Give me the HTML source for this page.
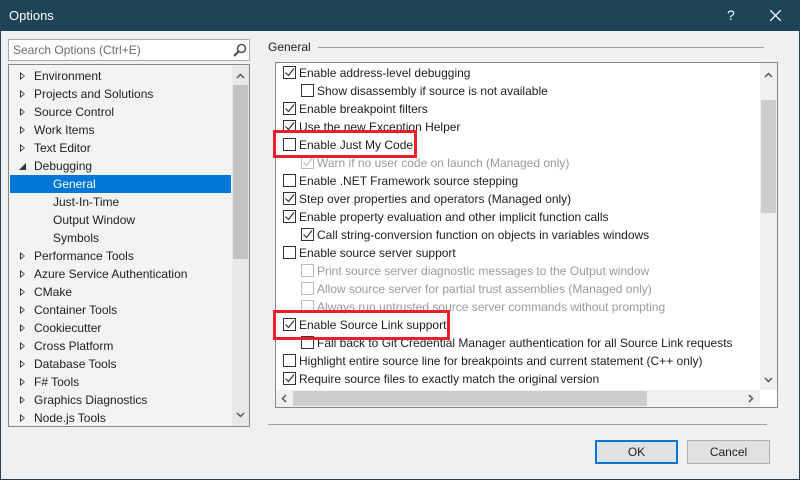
<!DOCTYPE html>
<html><head><style>
*{margin:0;padding:0;box-sizing:border-box}
body{width:800px;height:480px;background:#f0f0f0;font-family:"Liberation Sans",sans-serif;font-size:12px;color:#1e1e1e;position:relative;overflow:hidden}
.abs{position:absolute}
.frame{left:0;top:0;width:800px;height:480px;border:1px solid #1e4557;pointer-events:none}
.title{left:0;top:0;width:800px;height:31px;background:#1e4557;color:#fff;font-size:13px}
.tree{left:8px;top:64px;width:242px;height:363px;background:#f3f3f3;border:1px solid #828790;overflow:hidden}
.tr{position:absolute;left:0;height:18px;line-height:18px;white-space:nowrap}
.tri{position:absolute;left:11px;top:5px;width:0;height:0;border-left:5px solid #333;border-top:4px solid transparent;border-bottom:4px solid transparent}
.tri:after{content:"";position:absolute;left:-4px;top:-2px;border-left:3px solid #f3f3f3;border-top:2px solid transparent;border-bottom:2px solid transparent}
.box{left:275px;top:62px;width:503px;height:346px;background:#fff;border:1px solid #828790;overflow:hidden}
.cb{position:absolute;width:13px;height:13px;border:1px solid #333;background:#fff}
.cb.dis{border-color:#bcbcbc}
.lbl{position:absolute;white-space:nowrap;line-height:18px}
.dis2{color:#9a9a9a}
.btn{height:24px;top:440px;background:#e1e1e1;border:1px solid #adadad;text-align:center;line-height:22px}
.red{border:3px solid #e8202a}
</style></head><body>
<div class="abs title"><span style="position:absolute;left:9px;top:8px">Options</span><span style="position:absolute;left:727px;top:7px;font-size:14px">?</span>
<svg class="abs" style="left:770px;top:10px" width="11" height="11"><path d="M0 0L11 11M11 0L0 11" stroke="#fff" stroke-width="1.3"/></svg></div>

<div class="abs" style="left:8px;top:39px;width:242px;height:22px;background:#fff;border:1px solid #aaa"><span style="position:absolute;left:4px;top:3px;color:#6d6d6d">Search Options (Ctrl+E)</span>
<svg class="abs" style="left:224px;top:3px" width="14" height="14"><circle cx="8.5" cy="5.5" r="4" fill="none" stroke="#555" stroke-width="1.6"/><path d="M5.5 8.5L1 13" stroke="#555" stroke-width="2.2"/></svg></div>

<div class="abs tree">
<div class="abs" style="left:223px;top:0;width:17px;height:361px;background:#e8e8e8"></div>
<div class="abs" style="left:224px;top:20px;width:15px;height:174px;background:#c2c2c2"></div>
<svg class="abs" style="left:227px;top:8px" width="9" height="6"><path d="M1 5L4.5 1.5L8 5" stroke="#555" stroke-width="1.5" fill="none"/></svg>
<svg class="abs" style="left:227px;top:347px" width="9" height="6"><path d="M1 1L4.5 4.5L8 1" stroke="#555" stroke-width="1.5" fill="none"/></svg>
<div id="tree"></div>
</div>

<span class="abs" style="left:268px;top:40px">General</span>
<div class="abs" style="left:318px;top:47px;width:446px;height:1px;background:#a0a0a0"></div>

<div class="abs box">
<div class="abs" style="left:484px;top:0;width:17px;height:327px;background:#f0f0f0"></div>
<div class="abs" style="left:485px;top:37px;width:15px;height:113px;background:#cdcdcd"></div>
<svg class="abs" style="left:488px;top:9px" width="9" height="6"><path d="M1 5L4.5 1.5L8 5" stroke="#555" stroke-width="1.5" fill="none"/></svg>
<svg class="abs" style="left:488px;top:314px" width="9" height="6"><path d="M1 1L4.5 4.5L8 1" stroke="#555" stroke-width="1.5" fill="none"/></svg>
<div class="abs" style="left:0;top:327px;width:484px;height:17px;background:#f0f0f0"></div>
<div class="abs" style="left:17px;top:328px;width:354px;height:15px;background:#cdcdcd"></div>
<svg class="abs" style="left:5px;top:331px" width="6" height="9"><path d="M5 1L1.5 4.5L5 8" stroke="#555" stroke-width="1.5" fill="none"/></svg>
<svg class="abs" style="left:472px;top:331px" width="6" height="9"><path d="M1 1L4.5 4.5L1 8" stroke="#555" stroke-width="1.5" fill="none"/></svg>
<div id="opts"></div>
</div>

<div class="abs red" style="left:273px;top:130px;width:144px;height:28px"></div>
<div class="abs red" style="left:273px;top:310px;width:177px;height:30px"></div>

<div class="abs" style="left:268px;top:424px;width:499px;height:1px;background:#a0a0a0"></div>
<div class="abs btn" style="left:595px;width:83px;border:2px solid #0078d7;line-height:20px">OK</div>
<div class="abs btn" style="left:687px;width:83px">Cancel</div>
<div class="abs frame"></div>

<script>
var t=["Environment","Projects and Solutions","Source Control","Work Items","Text Editor","*Debugging","-General","-Just-In-Time","-Output Window","-Symbols","Performance Tools","Azure Service Authentication","CMake","Container Tools","Cookiecutter","Cross Platform","Database Tools","F# Tools","Graphics Diagnostics","Node.js Tools"];
var h="";t.forEach(function(s,i){var y=2+i*18;
if(s[0]=="-"){var sel=s=="-General";h+='<div class="tr" style="top:'+y+'px;left:1px;width:221px;'+(sel?'background:#0078d7;color:#fff;':'')+'"><span style="position:absolute;left:43px">'+s.slice(1)+'</span></div>';}
else if(s[0]=="*"){h+='<div class="tr" style="top:'+y+'px"><svg style="position:absolute;left:10px;top:6px" width="7" height="7"><path d="M7 0L7 7L0 7Z" fill="#333"/></svg><span style="position:absolute;left:25px">'+s.slice(1)+'</span></div>';}
else h+='<div class="tr" style="top:'+y+'px;width:220px"><div class="tri"></div><span style="position:absolute;left:25px">'+s+'</span></div>';});
document.getElementById("tree").innerHTML=h;
var o=[[0,1,0,"Enable address-level debugging"],[1,0,0,"Show disassembly if source is not available"],[0,1,0,"Enable breakpoint filters"],[0,1,0,"Use the new Exception Helper"],[0,0,0,"Enable Just My Code"],[1,1,1,"Warn if no user code on launch (Managed only)"],[0,0,0,"Enable .NET Framework source stepping"],[0,1,0,"Step over properties and operators (Managed only)"],[0,1,0,"Enable property evaluation and other implicit function calls"],[1,1,0,"Call string-conversion function on objects in variables windows"],[0,0,0,"Enable source server support"],[1,0,1,"Print source server diagnostic messages to the Output window"],[1,0,1,"Allow source server for partial trust assemblies (Managed only)"],[1,0,1,"Always run untrusted source server commands without prompting"],[0,1,0,"Enable Source Link support"],[1,0,0,"Fall back to Git Credential Manager authentication for all Source Link requests"],[0,0,0,"Highlight entire source line for breakpoints and current statement (C++ only)"],[0,1,0,"Require source files to exactly match the original version"]];
h="";o.forEach(function(r,i){var y=i*18+1,x=r[0]?25:7,c=r[2]?"#bcbcbc":"#333";
h+='<div class="cb'+(r[2]?' dis':'')+'" style="left:'+x+'px;top:'+(y+2)+'px">'+(r[1]?'<svg width="11" height="11" style="position:absolute;left:0;top:0"><path d="M1.5 5.5L4.5 8.5L10 1.5" stroke="'+c+'" stroke-width="1.2" fill="none"/></svg>':'')+'</div><div class="lbl'+(r[2]?' dis2':'')+'" style="left:'+(x+16)+'px;top:'+y+'px">'+r[3]+'</div>';});
document.getElementById("opts").innerHTML=h;
</script>
</body></html>
